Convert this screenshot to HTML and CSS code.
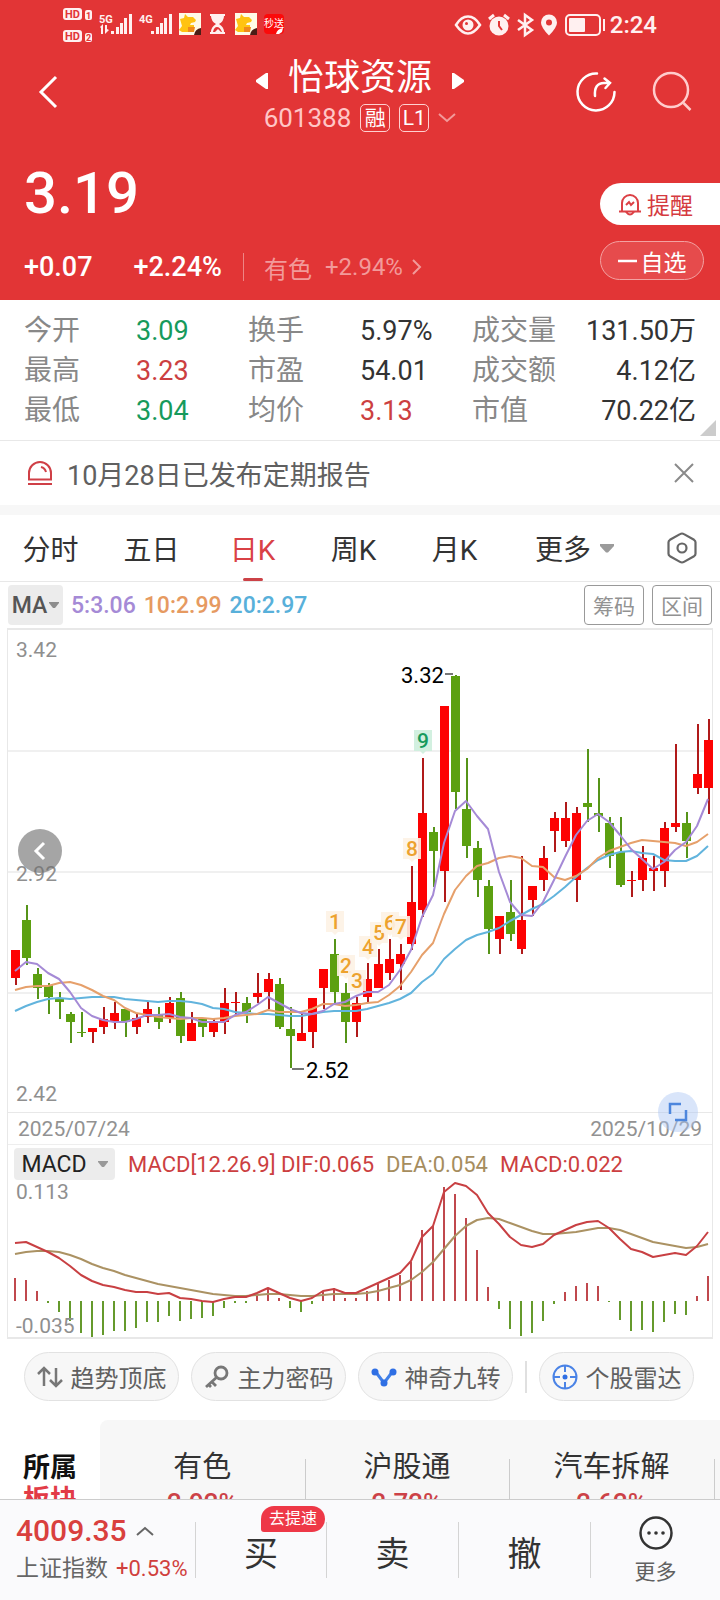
FILE: index.html
```html
<!DOCTYPE html>
<html lang="zh-CN">
<head>
<meta charset="utf-8">
<meta name="viewport" content="width=device-width, initial-scale=1">
<title>怡球资源 601388</title>
<link rel="stylesheet" href="styles.css">
</head>
<body>
<div class="app">
  <main class="content">
    <header class="hero">
      <div class="status">
        <div class="status-left">
          <svg width="218" height="36" viewBox="0 0 218 36" aria-hidden="true">
            <g fill="#fff0f0">
              <rect x="0" y="1" width="19" height="12" rx="3"/><rect x="0" y="23" width="19" height="12" rx="3"/>
              <rect x="22" y="3" width="7" height="10" rx="2"/><rect x="22" y="26" width="7" height="9" rx="2"/>
              <rect x="48" y="24" width="3" height="3"/><rect x="53" y="20" width="3" height="7"/><rect x="57" y="16" width="3" height="11"/><rect x="61" y="11" width="3" height="16"/><rect x="66" y="7" width="3" height="20"/>
              <rect x="88" y="24" width="3" height="3"/><rect x="93" y="20" width="3" height="7"/><rect x="97" y="16" width="3" height="11"/><rect x="101" y="11" width="3" height="16"/><rect x="106" y="7" width="3" height="20"/>
              <path d="M37 20l3-3v10h-2v-6zM42 20v7l4-4-2-1v-4h-2z"/>
            </g>
            <g class="status-mini">
              <text x="2" y="11" fill="#e23536">HD</text><text x="2" y="33" fill="#e23536">HD</text>
              <text x="23" y="12" class="sim" fill="#e23536">1</text><text x="23" y="34" class="sim" fill="#e23536">2</text>
              <text x="36" y="16" fill="#fff0f0">5G</text><text x="76" y="16" fill="#fff0f0">4G</text>
            </g>
            <g id="dog">
              <rect x="116" y="6" width="22" height="22" fill="#fffbe8"/>
              <path d="M117 12l4-1 1-4 3 3h5l3 3-1 2-4 1-1 2h4v4l-3 3h-9l-3-2 3-4z" fill="#ffc312"/>
              <path d="M125 20h7l-1 5h-6z" fill="#f08a1c"/><path d="M131 28q1-6 7-7v7z" fill="#4b1d16"/>
            </g>
            <use href="#dog" x="56"/>
            <path d="M147 7h15v2h-1q0 5-5 8 5 3 5 8h1v2h-15v-2h1q0-5 5-8-5-3-5-8h-1z" fill="#fff0f0"/>
            <path d="M150 25q1-5 4-5t5 5z" fill="#e23536"/><path d="M152 25l3-3 3 3z" fill="#fff0f0"/>
            <rect x="201" y="7" width="20" height="20" rx="4" fill="#fb0a0a"/>
            <text x="201" y="20" class="status-app">秒送</text>
            <path d="M213 27q1-5 7-6l-1 4-3 2z" fill="#fff"/>
          </svg>
        </div>
        <div class="status-right">
          <svg width="152" height="24" viewBox="0 0 152 24" fill="none" stroke="#fff0f0" stroke-width="2" aria-hidden="true">
            <path d="M1 12Q6 3.500 13 3.500T25 12Q19 20.500 13 20.500T1 12z" stroke-width="2.500"/><circle cx="13" cy="12" r="4.500" fill="#fff0f0"/><circle cx="11.500" cy="10.500" r="1.500" fill="#e23536" stroke="none"/>
            <circle cx="44" cy="13" r="9.500" fill="#fff0f0" stroke="none"/><path d="M34 6l5-4M54 6l-5-4" stroke-width="3"/><path d="M44 8v5l3 4" stroke="#e23536"/>
            <path d="M63 7l14 10-7 5V2l7 5-14 10" stroke-width="2.500"/>
            <path d="M94 1.500a8 8 0 0 1 8 8q0 5-8 13-8-8-8-13a8 8 0 0 1 8-8z" fill="#fff0f0" stroke="none"/><circle cx="94" cy="9.500" r="3" fill="#e23536" stroke="none"/>
            <rect x="111" y="2" width="34" height="20" rx="4"/><rect x="114" y="5" width="16" height="14" rx="1" fill="#fff0f0" stroke="none"/><path d="M149 6v12"/>
          </svg>
          <span class="clock">2:24</span>
        </div>
      </div>
      <div class="titlebar">
        <button class="icon-btn back" aria-label="返回"><svg width="20" height="34" viewBox="0 0 20 34"><path d="M18 2L3 17l15 15" fill="none" stroke="#fff" stroke-width="3"/></svg></button>
        <div class="title">
          <div class="name-row">
            <button class="icon-btn" aria-label="上一只"><svg width="12" height="18" viewBox="0 0 12 18"><path d="M12 1v16h-2L0 10V8L10 1z" fill="#fff"/></svg></button>
            <h1>怡球资源</h1>
            <button class="icon-btn" aria-label="下一只"><svg width="12" height="18" viewBox="0 0 12 18"><path d="M0 1v16h2l10-7V8L2 1z" fill="#fff"/></svg></button>
          </div>
          <div class="code-row">
            <span class="code">601388</span><span class="badge">融</span><span class="badge">L1</span>
            <svg width="18" height="10" viewBox="0 0 18 10"><path d="M1 1l8 7 8-7" fill="none" stroke="#f29a9a" stroke-width="2"/></svg>
          </div>
        </div>
        <div class="title-actions">
          <button class="icon-btn" aria-label="分享"><svg width="40" height="40" viewBox="0 0 40 40" fill="none" stroke="#fff" stroke-width="2.500" stroke-linecap="round"><path d="M21 1.500A18.500 18.500 0 1 0 38.500 20"/><path d="M19 24q-1-13 9-13h6M28.500 6.500L34 11l-4.500 5"/></svg></button>
          <button class="icon-btn" aria-label="搜索"><svg width="40" height="40" viewBox="0 0 40 40" fill="none" stroke="#ffcccc" stroke-width="2.500"><circle cx="19" cy="18" r="17"/><path d="M31.500 31l7 7"/></svg></button>
        </div>
      </div>
      <div class="quote">
        <div class="quote-main">
          <p class="price">3.19</p>
          <div class="change"><span>+0.07</span><span>+2.24%</span><a class="sector-link" href="#sectors"><span>有色</span><span>+2.94%</span><svg width="10" height="16" viewBox="0 0 10 16"><path d="M1 1l7 7-7 7" fill="none" stroke="#f29a9a" stroke-width="2"/></svg></a></div>
        </div>
        <div class="quote-actions">
          <button class="remind"><svg width="24" height="24" viewBox="0 0 24 24" fill="none" stroke="#dc4045" stroke-width="2"><path d="M1 19.500h22M4 19v-8a8 8 0 0 1 16 0v8M8 20q4 5 8 0"/><path d="M8 13l3-3 2 3 3-3"/></svg>提醒</button>
          <button class="watch"><svg width="19" height="4" viewBox="0 0 19 4"><path d="M0 2h19" stroke="#fff" stroke-width="2.500"/></svg>自选</button>
        </div>
      </div>
    </header>

    <dl class="stats">
      <div><dt>今开</dt><dd class="down">3.09</dd></div><div><dt>换手</dt><dd>5.97%</dd></div><div class="wide"><dt>成交量</dt><dd>131.50万</dd></div>
      <div><dt>最高</dt><dd class="up">3.23</dd></div><div><dt>市盈</dt><dd>54.01</dd></div><div class="wide"><dt>成交额</dt><dd>4.12亿</dd></div>
      <div><dt>最低</dt><dd class="down">3.04</dd></div><div><dt>均价</dt><dd class="up">3.13</dd></div><div class="wide"><dt>市值</dt><dd>70.22亿</dd></div>
    </dl>

    <div class="notice">
      <svg width="26" height="26" viewBox="0 0 26 26" fill="none" stroke="#cf3f46" stroke-width="2"><path d="M2 19.500V13a11 11 0 0 1 22 0v6.500zM1 24h24M14 7q4 1 5 5"/></svg>
      <p>10月28日已发布定期报告</p>
      <button class="icon-btn" aria-label="关闭"><svg width="20" height="20" viewBox="0 0 20 20"><path d="M1 1l18 18M19 1L1 19" stroke="#8a8a8a" stroke-width="2"/></svg></button>
    </div>

    <nav class="tabs">
      <button>分时</button><button>五日</button><button class="active">日K</button><button>周K</button><button>月K</button>
      <button class="more">更多<svg width="14" height="9" viewBox="0 0 14 9"><path d="M0 0h14v2L8 8.500H6L0 2z" fill="#9b9b9b"/></svg></button>
      <button class="settings" aria-label="设置"><svg width="30" height="32" viewBox="0 0 30 32" fill="none" stroke="#666" stroke-width="2.200"><path d="M15 1.500q1 0 2 .6l10 5.700q1.500 1 1.500 2.500v11.400q0 1.500-1.500 2.500l-10 5.700q-2 1.200-4 0L3 24.200q-1.500-1-1.500-2.500V10.300Q1.500 8.800 3 7.800l10-5.700q1-.6 2-.6z"/><circle cx="15" cy="16" r="4.500"/></svg></button>
    </nav>

    <section class="chart">
      <div class="ma-row">
        <button class="ma-btn">MA<svg width="10" height="6" viewBox="0 0 10 6"><path d="M0 0h10v1L6 6H4L0 1z" fill="#8d8d8d"/></svg></button>
        <span class="ma5">5:3.06</span><span class="ma10">10:2.99</span><span class="ma20">20:2.97</span>
        <button class="outline">筹码</button><button class="outline">区间</button>
      </div>
      <div class="panel">
        <div class="plot">
          <svg id="candles" viewBox="8 630 704 482" role="img" aria-label="日K线图"></svg>
          <button class="scroll-left" aria-label="更早"><svg width="14" height="20" viewBox="0 0 14 20"><path d="M11 2L3 10l8 8" fill="none" stroke="#fff" stroke-width="3"/></svg></button>
          <button class="expand" aria-label="全屏"><svg width="20" height="20" viewBox="0 0 20 20"><path d="M2 12V2h11M18 8v10H7" fill="none" stroke="#4d86dd" stroke-width="2.500"/></svg></button>
        </div>
        <div class="dates"><span>2025/07/24</span><span>2025/10/29</span></div>
        <div class="macd-row">
          <button class="macd-btn">MACD<svg width="10" height="6" viewBox="0 0 10 6"><path d="M0 0h10v1L6 6H4L0 1z" fill="#999"/></svg></button>
          <span class="up">MACD[12.26.9] DIF:0.065</span><span class="dea">DEA:0.054</span><span class="up">MACD:0.022</span>
        </div>
        <svg id="macd" viewBox="8 1183 704 154" role="img" aria-label="MACD"></svg>
      </div>
    </section>

    <div class="tools">
      <button><svg width="26" height="22" viewBox="0 0 26 22" fill="none" stroke="#777" stroke-width="2.500"><path d="M7 20V2M1 8l6-6 6 6M19 2v18M13 14l6 6 6-6"/></svg>趋势顶底</button>
      <button><svg width="26" height="24" viewBox="0 0 26 24" fill="none" stroke="#777" stroke-width="2.800"><circle cx="17" cy="8" r="6"/><path d="M13 12L2 22M8 17l4 4M4 19l3 3"/></svg>主力密码</button>
      <button><svg width="26" height="22" viewBox="0 0 26 22"><path d="M4 5l9 12 9-12" fill="none" stroke="#3f7fe8" stroke-width="3"/><g fill="#2f6fe4"><circle cx="4" cy="6" r="3.500"/><circle cx="22" cy="6" r="3.500"/><circle cx="13" cy="17" r="3.500"/></g></svg>神奇九转</button>
      <i class="tools-sep"></i>
      <button><svg width="26" height="26" viewBox="0 0 26 26" fill="none" stroke="#4a83e6" stroke-width="2"><circle cx="13" cy="13" r="11.500"/><path d="M13 1v7M13 18v7M1 13h7M18 13h7"/><circle cx="13" cy="13" r="2.500" fill="#2f6fe4" stroke="none"/></svg>个股雷达</button>
    </div>

    <section class="sectors" id="sectors">
      <h2>所属<em>板块</em></h2>
      <div class="sector-list">
        <a href="#"><span>有色</span><b>2.92%</b></a>
        <a href="#"><span>沪股通</span><b>2.72%</b></a>
        <a href="#"><span>汽车拆解</span><b>2.62%</b></a>
        <a href="#" aria-label="下一板块"></a>
      </div>
    </section>
  </main>

  <footer class="bottom">
    <a class="index" href="#">
      <span class="index-value">4009.35<svg width="18" height="10" viewBox="0 0 18 10"><path d="M1 9l8-7 8 7" fill="none" stroke="#666" stroke-width="2"/></svg></span>
      <span class="index-name">上证指数<small>+0.53%</small></span>
    </a>
    <button class="trade">买<span class="tag">去提速</span></button>
    <button class="trade">卖</button>
    <button class="trade">撤</button>
    <button class="trade more-btn"><svg width="34" height="34" viewBox="0 0 34 34"><circle cx="17" cy="17" r="15.500" fill="none" stroke="#333" stroke-width="2.500"/><g fill="#333"><circle cx="10" cy="17" r="1.800"/><circle cx="17" cy="17" r="1.800"/><circle cx="24" cy="17" r="1.800"/></g></svg>更多</button>
  </footer>
</div>
<script src="chart.js"></script>
</body>
</html>
```
FILE: styles.css
```css
* { box-sizing: border-box; }
body, h1, h2, p, dl, dd { margin: 0; }
body { font-family: Roboto, "Noto Sans CJK SC", sans-serif; color: #333; background: #fff; }
button { margin: 0; padding: 0; border: 0; background: none; color: inherit; font: inherit; }
a { color: inherit; text-decoration: none; }
svg { display: block; flex: none; overflow: visible; }
h1, h2, b, em { font-weight: 400; font-style: normal; }

.app { display: flex; flex-direction: column; height: 100vh; }
.content { flex: 1; min-height: 0; overflow: hidden; }
.up { color: #cc3f41; }
.down { color: #169a5c; }
.icon-btn { display: flex; }

.hero { background: #e23536; color: #fff; padding-bottom: 18px; }
.status { display: flex; justify-content: space-between; align-items: center; height: 50px; padding: 0 63px; }
.status-mini { font-weight: 700; font-size: 11px; }
.sim { font-size: 9px; }
.status-app { font-size: 10px; fill: #fff; }
.status-right { display: flex; align-items: center; gap: 3px; color: #fff0f0; }
.clock { font-size: 24px; font-weight: 500; line-height: 28px; }

.titlebar { display: grid; grid-template-columns: 1fr auto 1fr; align-items: center; height: 84px; padding: 0 28px; }
.back { margin-left: 10px; }
.title { display: flex; flex-direction: column; align-items: center; padding-top: 3px; }
.name-row { display: flex; align-items: center; gap: 20px; }
.name-row .icon-btn { padding-top: 6px; }
.name-row h1 { font-size: 36px; line-height: 48px; }
.code-row { display: flex; align-items: center; gap: 9px; height: 32px; }
.code { font-size: 26px; color: #ffc6c6; }
.badge { display: grid; place-items: center; width: 30px; height: 28px; border: 1px solid #ffd0d0; border-radius: 5px; font-size: 21px; line-height: 26px; }
.title-actions { display: flex; justify-content: flex-end; gap: 36px; }

.quote { display: flex; justify-content: space-between; padding-top: 27px; }
.quote-main { padding-left: 24px; }
.price { font-size: 58px; font-weight: 500; line-height: 64px; }
.change { display: flex; align-items: center; gap: 41px; height: 30px; margin-top: 27px; font-size: 27px; font-weight: 500; }
.sector-link { display: flex; align-items: center; gap: 9px; height: 28px; margin-left: -20px; padding-left: 20px; border-left: 1px solid #ee8585; font-size: 24px; font-weight: 400; color: #f29a9a; }
.sector-link span + span { padding-left: 4px; }
.quote-actions { display: flex; flex-direction: column; gap: 16px; width: 120px; padding-top: 22px; }
.remind { display: flex; align-items: center; gap: 5px; height: 42px; padding-left: 18px; border-radius: 21px 0 0 21px; background: #fff; color: #d53a40; font-size: 23px; }
.watch { display: flex; align-items: center; justify-content: center; gap: 4px; width: 104px; height: 39px; border: 1px solid #f3a2a2; border-radius: 20px; background: #e64b4c; font-size: 23px; }

.stats { position: relative; display: grid; grid-template-columns: 1fr 1fr 1fr; padding: 11px 24px 9px; border-bottom: 1px solid #e8e8e8; line-height: 40px; }
.stats div { display: grid; grid-template-columns: 1fr 1fr; }
.stats .wide { display: flex; justify-content: space-between; }
.stats dt { font-size: 28px; color: #888; white-space: nowrap; }
.stats dd { font-size: 27px; }
.stats::after { content: ""; position: absolute; right: 4px; bottom: 4px; border: 8px solid #ccc; border-top-color: transparent; border-left-color: transparent; }

.notice { display: flex; align-items: center; gap: 14px; height: 74px; padding: 0 26px 0 27px; border-bottom: 10px solid #f7f7f7; font-size: 27px; color: #606060; }
.notice p { flex: 1; }

.tabs { display: grid; grid-template-columns: repeat(6, 102fr) 107fr; height: 67px; border-bottom: 1px solid #e8e8e8; font-size: 28px; }
.tabs button { position: relative; display: flex; align-items: center; justify-content: center; white-space: nowrap; }
.tabs .more { gap: 9px; padding-left: 30px; }
.tabs .settings { justify-content: flex-end; padding-right: 23px; }
.tabs .active { color: #d94146; }
.tabs .active::after { content: ""; position: absolute; left: 50%; bottom: 0; width: 20px; height: 3px; margin-left: -10px; border-radius: 2px; background: #cc4247; }

.chart { padding: 0 7px; }
.ma-row { display: flex; align-items: center; gap: 8px; height: 46px; padding: 0 1px; font-size: 23px; font-weight: 500; }
.ma-btn { display: flex; align-items: center; justify-content: center; gap: 2px; width: 55px; height: 40px; border-radius: 4px; background: #ececec; color: #555; }
.ma5 { color: #a58ad6; }
.ma10 { color: #e69a61; }
.ma20 { color: #58b0da; margin-right: auto; }
.outline { width: 60px; height: 40px; border: 1px solid #999; border-radius: 4px; color: #929292; font-size: 21px; font-weight: 400; }
.panel { border: 1px solid #e8e8e8; border-width: 2px 1px; }
.plot { position: relative; border-bottom: 1px solid #e8e8e8; }
#candles, #macd { width: 100%; height: auto; }
.plot button { position: absolute; display: grid; place-items: center; border-radius: 50%; }
.scroll-left { left: 10px; top: 199px; width: 44px; height: 44px; background: rgba(110, 110, 110, .62); }
.expand { right: 14px; bottom: -20px; width: 40px; height: 40px; background: rgba(170, 198, 245, .45); }
.dates { display: flex; justify-content: space-between; height: 32px; padding: 0 10px; border-bottom: 1px solid #eee; font-size: 21px; line-height: 32px; color: #929292; }
.macd-row { display: flex; align-items: center; gap: 12px; height: 38px; padding-left: 6px; font-size: 22px; white-space: pre; }
.macd-btn { display: flex; align-items: center; justify-content: center; gap: 11px; width: 101px; height: 32px; margin-right: 1px; border-radius: 4px; background: #ececec; color: #222; font-size: 23px; }
.dea { color: #a68d5e; }

.axis { font-size: 21px; fill: #8f8f8f; }
.peak { font-size: 22px; fill: #000; }
.turn { font-size: 21px; font-weight: 500; text-anchor: middle; fill: #eda22f; }
.turn-last { fill: #169a5c; }
.line { fill: none; stroke-width: 2; stroke-linejoin: round; }

.tools { display: flex; align-items: center; justify-content: space-between; padding: 13px 26px 19px 24px; }
.tools button { display: flex; align-items: center; justify-content: center; gap: 8px; width: 155px; height: 49px; border: 1px solid #e2e2e2; border-radius: 25px; background: #f7f7f7; color: #606060; font-size: 24px; }
.tools-sep { width: 2px; height: 32px; background: #e0e0e0; }

.sectors { display: flex; }
.sectors h2 { flex: none; width: 100px; padding: 32px 0 0 23px; font-size: 27px; font-weight: 700; line-height: 32px; color: #111; }
.sectors em { display: block; font-weight: 700; color: #e23c47; }
.sector-list { display: grid; flex: 1; grid-template-columns: repeat(3, 33%) 1fr; height: 130px; padding-top: 29px; border-radius: 8px 0 0; background: #f7f7f7; }
.sector-list a { position: relative; display: flex; flex-direction: column; align-items: center; font-size: 29px; line-height: 36px; }
.sector-list b { font-size: 26px; line-height: 36px; font-weight: 500; color: #cc4247; }
.sector-list a + a::before { content: ""; position: absolute; left: 0; top: 10px; width: 1px; height: 80px; background: #ccc; }

.bottom { display: grid; grid-template-columns: 195fr 131fr 132fr 132fr 130fr; align-items: center; height: 101px; border-top: 1px solid #ccc; background: #fafafc; }
.index { display: flex; flex-direction: column; padding-left: 16px; white-space: nowrap; }
.index-value { display: flex; align-items: center; gap: 9px; font-size: 30px; font-weight: 500; line-height: 38px; color: #d9403e; }
.index-name { font-size: 23px; line-height: 38px; color: #666; }
.index-name small { margin-left: 8px; font-size: 22px; color: #d03f3d; }
.trade { position: relative; height: 56px; border-left: 1px solid #d4d4d4; font-size: 34px; line-height: 56px; padding-top: 4px; }
.tag { position: absolute; left: 50%; top: -16px; padding: 0 8px; border-radius: 13px 13px 13px 3px; background: #ee3847; color: #fff; font-size: 16px; line-height: 26px; white-space: nowrap; }
.more-btn { display: flex; flex-direction: column; align-items: center; justify-content: center; gap: 8px; padding: 2px 0 0; font-size: 21px; line-height: 28px; color: #606060; }
```
FILE: chart.js
```js
const STEP = 11;
const X0 = 15;
const xAt = i => X0 + i * STEP;

// up flag, body top, body bottom, wick top, wick bottom
const candles = [
  [1,950,978,950,985],[0,920,958,905,965],[0,974,988,968,999],[0,985,997,983,1014],[0,998,1002,992,1019],
  [0,1014,1022,1012,1043],[0,1032,1033,1012,1037],[1,1028,1032,1028,1043],[1,1019,1027,1007,1034],[1,1013,1022,1002,1029],
  [0,1009,1022,1009,1037],[1,1018,1027,1014,1034],[1,1009,1017,1002,1023],[0,1014,1022,1007,1029],[1,1003,1018,997,1023],
  [0,998,1036,992,1043],[1,1023,1041,1012,1041],[0,1018,1027,1018,1037],[1,1023,1032,1018,1037],[1,1003,1022,988,1034],
  [1,1002,1003,992,1014],[0,1003,1012,997,1023],[1,993,997,973,1003],[1,979,992,973,1009],[0,984,1027,978,1029],
  [0,1029,1036,1007,1068],[1,1033,1041,1014,1041],[1,998,1032,998,1048],[1,969,988,969,1009],[0,954,992,939,1003],
  [0,993,1022,983,1043],[1,1003,1022,997,1037],[1,979,997,963,1002],[1,964,988,949,988],[1,959,973,939,980],
  [1,954,964,944,990],[1,902,944,866,950],[1,813,910,758,917],[0,832,851,827,887],[1,706,871,706,902],
  [0,676,792,675,809],[0,809,846,758,858],[0,848,880,841,897],[0,886,929,880,954],[1,916,939,916,954],
  [0,912,934,880,941],[1,920,949,856,954],[1,886,900,886,916],[1,858,880,846,891],[1,818,831,812,852],
  [1,818,841,802,847],[1,813,880,807,902],[0,803,807,749,822],[0,813,816,778,832],[0,823,856,817,868],
  [0,852,885,817,887],[1,880,881,871,897],[1,858,880,846,891],[1,868,871,856,891],[1,828,871,822,887],
  [1,823,827,744,832],[0,823,841,812,858],[1,774,788,724,794],[1,740,788,719,814]
];
const ma5 = [971,962,964,973,979,992,1008,1016,1020,1022,1022,1019,1015,1015,1014,1017,1018,1022,1022,1022,1015,1012,1005,997,1003,1009,1013,1014,1011,1004,1002,996,992,992,985,970,950,917,895,843,811,801,816,829,872,902,915,916,902,880,857,835,821,814,822,835,849,859,869,862,850,842,826,799];
const ma10 = [990,987,986,986,983,982,985,990,996,1000,1008,1013,1015,1017,1018,1019,1018,1018,1019,1018,1016,1015,1014,1010,1012,1012,1012,1009,1004,1004,1006,1005,1003,1002,995,986,972,955,943,914,890,876,866,863,858,856,858,866,867,877,880,876,869,858,851,847,843,840,841,842,843,846,842,834];
const ma20 = [1011,1006,1002,999,998,999,998,997,997,997,999,1000,1001,1002,1001,1001,1002,1004,1008,1009,1012,1013,1014,1014,1015,1016,1016,1014,1012,1011,1011,1011,1009,1006,1003,999,993,982,974,959,949,940,935,932,928,921,915,909,904,896,887,877,868,860,855,852,851,853,854,860,861,861,856,846];

const dif = [1243,1242,1247,1252,1258,1266,1275,1281,1285,1287,1290,1292,1292,1294,1293,1298,1299,1301,1302,1299,1297,1297,1293,1288,1293,1298,1301,1298,1291,1289,1293,1293,1288,1283,1278,1273,1261,1237,1226,1192,1183,1186,1195,1213,1224,1237,1245,1247,1244,1235,1230,1225,1222,1221,1228,1239,1249,1252,1257,1255,1253,1255,1246,1232];
const dea = [1254,1252,1251,1251,1252,1255,1259,1264,1268,1271,1275,1278,1281,1284,1286,1288,1290,1292,1294,1295,1296,1296,1295,1294,1294,1295,1296,1296,1295,1294,1294,1294,1293,1291,1288,1285,1280,1272,1262,1249,1236,1226,1220,1218,1219,1223,1227,1231,1234,1234,1233,1232,1230,1228,1228,1230,1234,1238,1242,1244,1246,1248,1247,1244];
const ZERO = 1301;
const bars = [1278,1280,1291,1303,1312,1321,1333,1337,1335,1331,1331,1328,1322,1322,1316,1321,1319,1318,1316,1308,1303,1303,1296,1288,1298,1308,1312,1304,1292,1288,1298,1298,1291,1284,1280,1275,1262,1230,1226,1187,1194,1218,1250,1287,1309,1329,1336,1333,1321,1304,1292,1286,1283,1286,1302,1320,1331,1330,1332,1322,1314,1315,1296,1276];

// day number, centre of the label
const turns = [[1,922],[2,966],[3,981],[4,947],[5,933],[6,923],[7,927],[8,849],[9,741]];

const polyline = (ys, color) =>
  `<polyline class="line" stroke="${color}" points="${ys.map((y, i) => `${xAt(i)},${y}`).join(' ')}"/>`;

let k = '';
for (const y of [751, 872, 993]) k += `<path d="M8 ${y}H712" stroke="#f0f0f0" stroke-width="2"/>`;
candles.forEach(([up, top, bottom, high, low], i) => {
  const x = xAt(i) + 1;
  k += `<path d="M${x} ${high}V${low}" stroke="${up ? '#b01a1a' : '#569419'}" stroke-width="2"/>`;
  k += `<rect x="${x - 5}" y="${top}" width="9" height="${bottom - top}" fill="${up ? '#fd0202' : '#5ca010'}"/>`;
});
k += polyline(ma20, '#62b4dd') + polyline(ma10, '#e6a06b') + polyline(ma5, '#a58ad6');
turns.forEach(([n, cy], j) => {
  const x = xAt(29 + j) + 1;
  const last = n === 9;
  k += `<path d="M${x - 9} ${cy - 11}h18v21h-6l-3 3-3-3h-6z" fill="${last ? '#cdeedd' : '#fdf2e4'}" fill-opacity=".9"/>`;
  k += `<text class="turn${last ? ' turn-last' : ''}" x="${x}" y="${cy + 7}">${n}</text>`;
});
k += `<path d="M445 674h8M292 1069h12" stroke="#777" stroke-width="2"/>
<text class="peak" x="401" y="683">3.32</text><text class="peak" x="306" y="1078">2.52</text>
<text class="axis" x="16" y="657">3.42</text><text class="axis" x="16" y="881">2.92</text><text class="axis" x="16" y="1101">2.42</text>`;
document.getElementById('candles').innerHTML = k;

let m = '';
bars.forEach((y, i) => {
  m += `<path d="M${xAt(i)} ${ZERO}V${y}" stroke="${y < ZERO ? '#c0484d' : '#659a2c'}" stroke-width="2"/>`;
});
m += polyline(dea, '#ab9263') + polyline(dif, '#c84043');
m += '<text class="axis" x="16" y="1199">0.113</text><text class="axis" x="16" y="1333">-0.035</text>';
document.getElementById('macd').innerHTML = m;
```
